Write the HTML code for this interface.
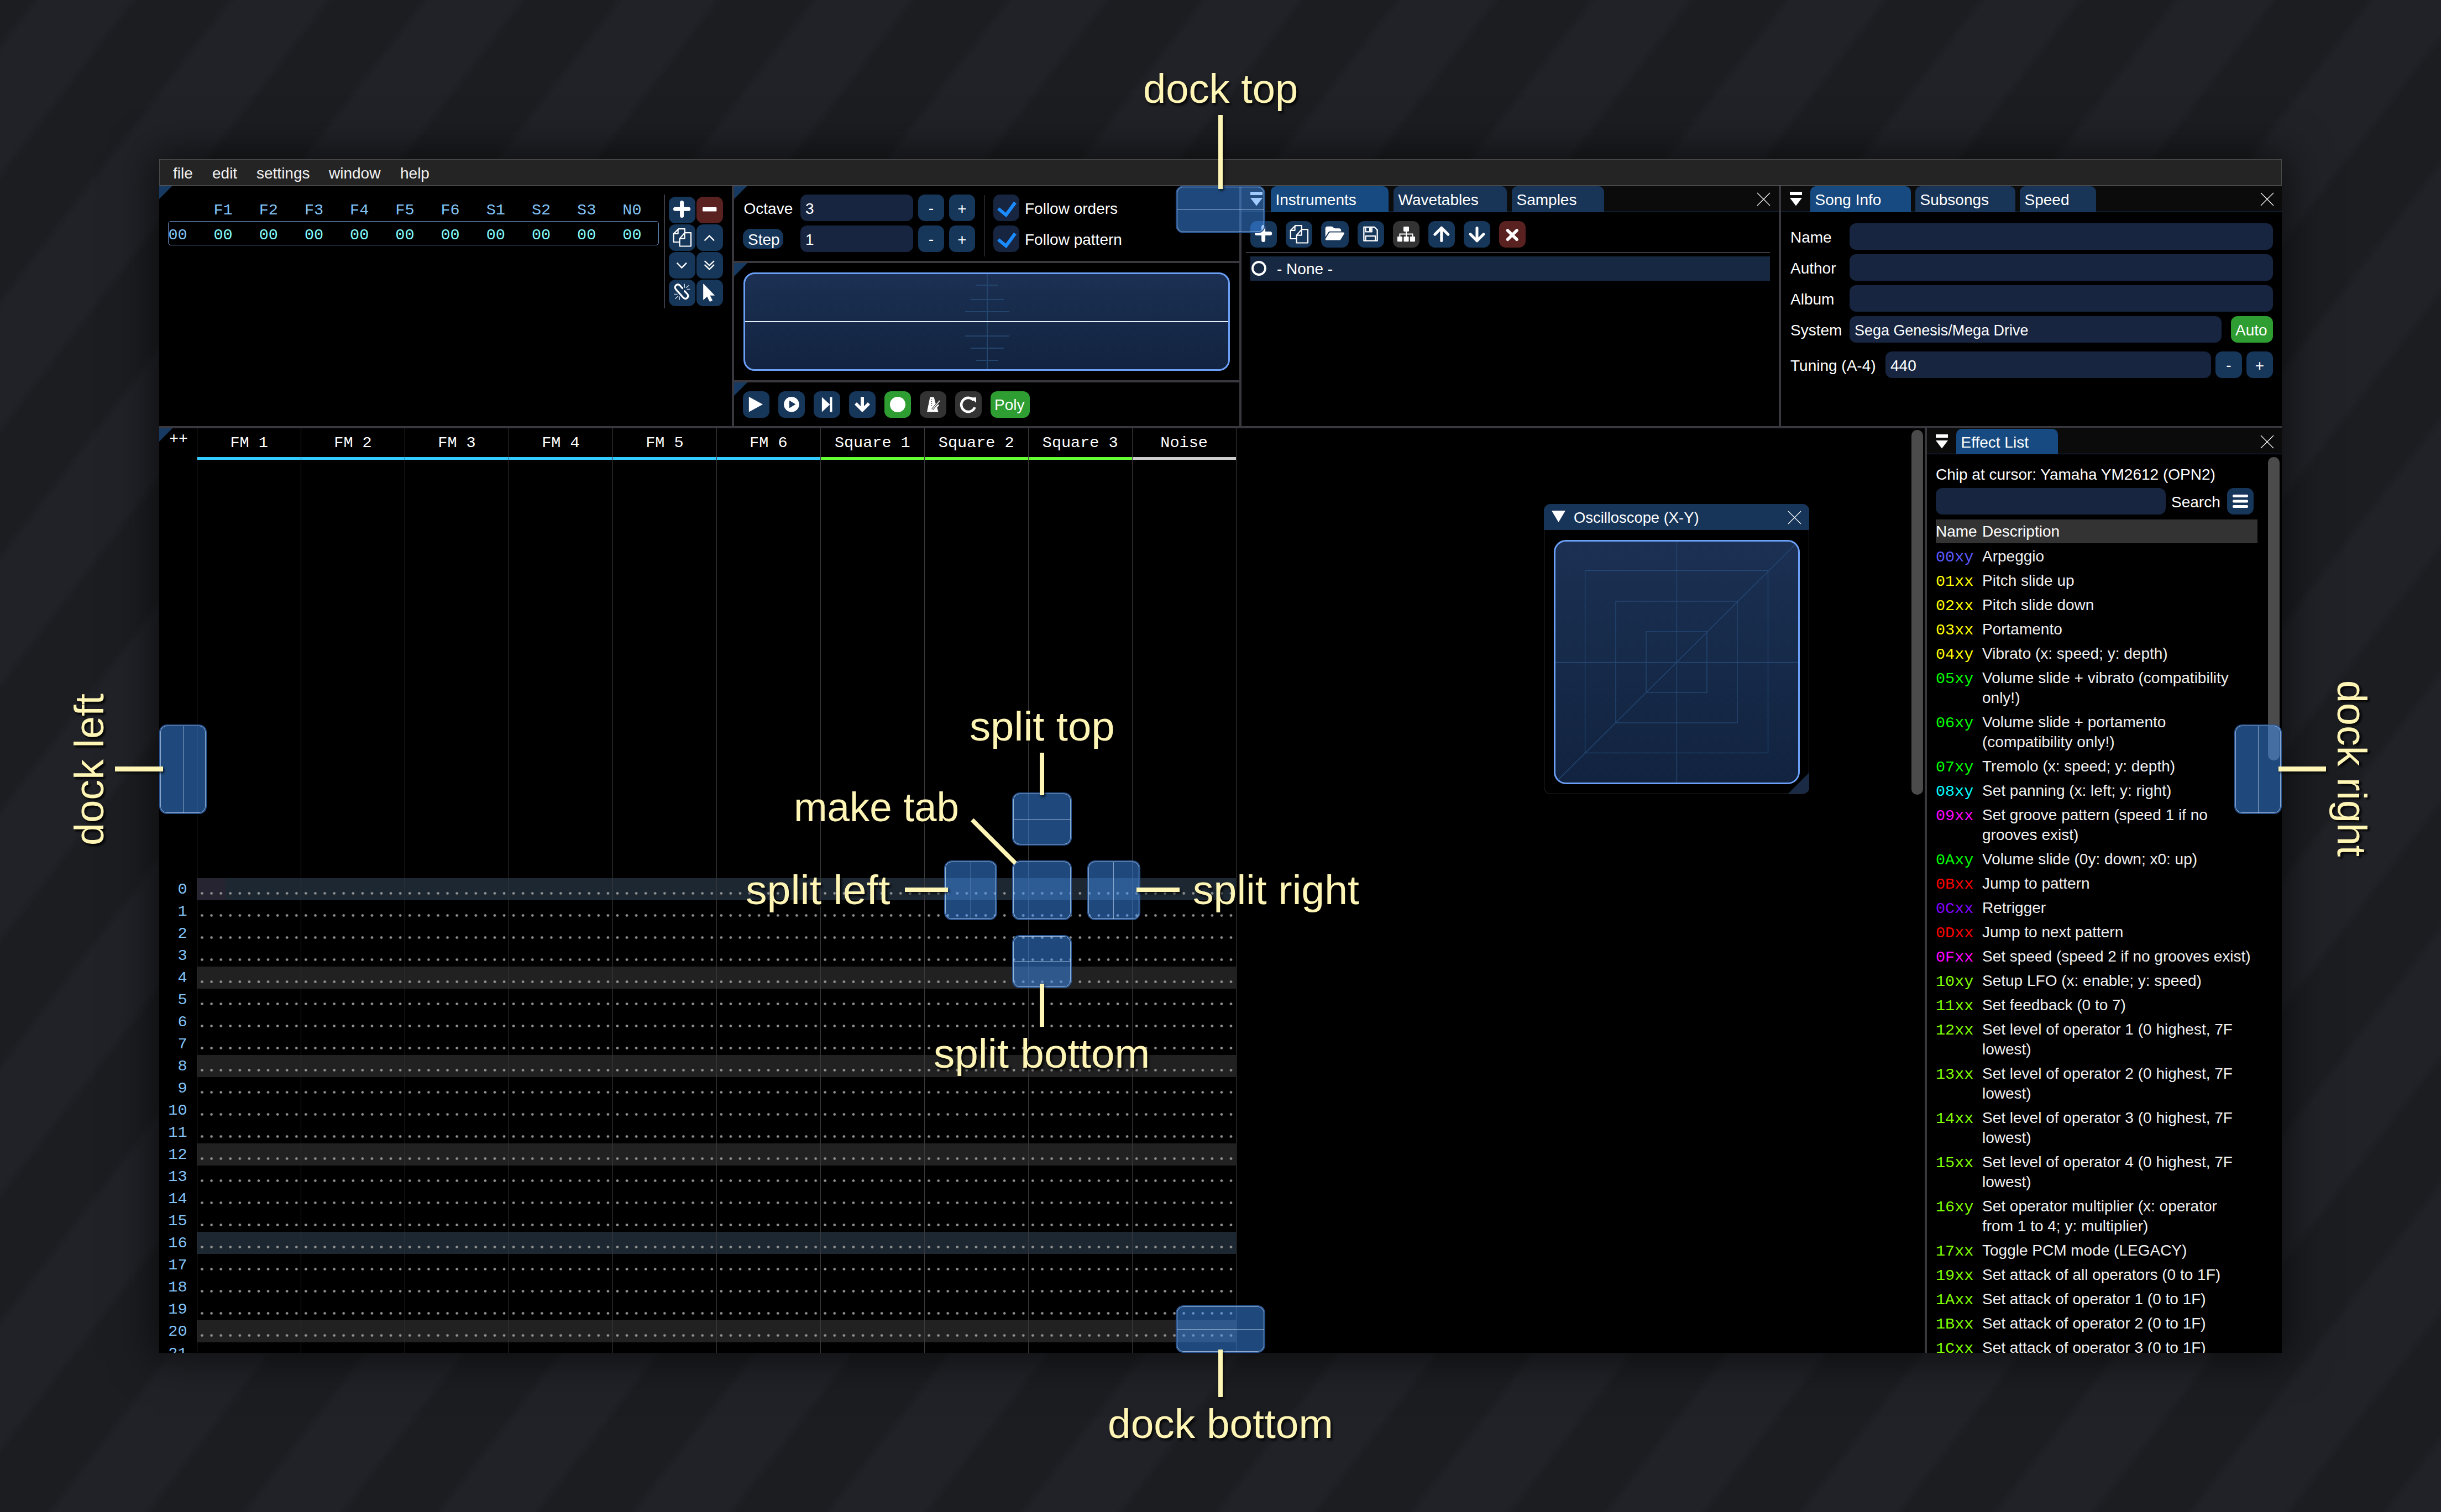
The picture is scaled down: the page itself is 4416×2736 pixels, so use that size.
<!DOCTYPE html><html><head><meta charset="utf-8"><style>
html,body{margin:0;padding:0;}
body{width:4416px;height:2736px;overflow:hidden;position:relative;
background-color:#1e1f23;
background-image:repeating-linear-gradient(127.33deg,#1c1d21 0px,#1c1d21 44px,#212227 60px,#212227 184px,#1c1d21 200px,#1c1d21 279.9px);
font-family:"Liberation Sans", sans-serif;}
div,svg{position:absolute;box-sizing:border-box;}
.t{white-space:pre;}
.s{font-family:"Liberation Sans", sans-serif;}
.m{font-family:"Liberation Mono", monospace;}
.ann{font-family:"Liberation Sans", sans-serif;color:#fff5b5;font-size:74px;line-height:74px;white-space:pre;text-shadow:3px 4px 4px rgba(0,0,0,0.85);}
</style></head><body>

<div style="left:288.0px;top:288.0px;width:3840.0px;height:2160.0px;background:#000;box-shadow:0 0 70px 12px rgba(0,0,0,0.55);"></div>
<div style="left:288.0px;top:288.0px;width:3840.0px;height:48.0px;background:#242424;border:1px solid #4a4a4a;border-bottom:1px solid #555;"></div>
<div class="t s" style="left:313.0px;top:299.8px;font-size:28px;line-height:28px;color:#f2f2f2;">file</div>
<div class="t s" style="left:384.0px;top:299.8px;font-size:28px;line-height:28px;color:#f2f2f2;">edit</div>
<div class="t s" style="left:464.0px;top:299.8px;font-size:28px;line-height:28px;color:#f2f2f2;">settings</div>
<div class="t s" style="left:595.0px;top:299.8px;font-size:28px;line-height:28px;color:#f2f2f2;">window</div>
<div class="t s" style="left:724.0px;top:299.8px;font-size:28px;line-height:28px;color:#f2f2f2;">help</div>
<div style="left:1324.0px;top:336.0px;width:4.0px;height:436.0px;background:#38383e;"></div>
<div style="left:2242.0px;top:336.0px;width:4.0px;height:436.0px;background:#38383e;"></div>
<div style="left:3218.0px;top:336.0px;width:4.0px;height:436.0px;background:#38383e;"></div>
<div style="left:1328.0px;top:472.0px;width:914.0px;height:4.0px;background:#38383e;"></div>
<div style="left:1328.0px;top:688.0px;width:914.0px;height:4.0px;background:#38383e;"></div>
<div style="left:288.0px;top:771.0px;width:3840.0px;height:4.0px;background:#38383e;"></div>
<div style="left:3482.0px;top:775.0px;width:4.0px;height:1673.0px;background:#38383e;"></div>
<svg style="left:288.0px;top:336.0px;" width="24" height="24" viewBox="0 0 24 24"><path d="M0 0H24L0 24Z" fill="#173a62"/></svg>
<div class="t m" style="left:386.5px;top:367.2px;font-size:28.5px;line-height:28.5px;color:#82c4f8;">F1</div>
<div class="t m" style="left:468.7px;top:367.2px;font-size:28.5px;line-height:28.5px;color:#82c4f8;">F2</div>
<div class="t m" style="left:550.9px;top:367.2px;font-size:28.5px;line-height:28.5px;color:#82c4f8;">F3</div>
<div class="t m" style="left:633.1px;top:367.2px;font-size:28.5px;line-height:28.5px;color:#82c4f8;">F4</div>
<div class="t m" style="left:715.3px;top:367.2px;font-size:28.5px;line-height:28.5px;color:#82c4f8;">F5</div>
<div class="t m" style="left:797.5px;top:367.2px;font-size:28.5px;line-height:28.5px;color:#82c4f8;">F6</div>
<div class="t m" style="left:879.7px;top:367.2px;font-size:28.5px;line-height:28.5px;color:#82c4f8;">S1</div>
<div class="t m" style="left:961.9px;top:367.2px;font-size:28.5px;line-height:28.5px;color:#82c4f8;">S2</div>
<div class="t m" style="left:1044.1px;top:367.2px;font-size:28.5px;line-height:28.5px;color:#82c4f8;">S3</div>
<div class="t m" style="left:1126.3px;top:367.2px;font-size:28.5px;line-height:28.5px;color:#82c4f8;">N0</div>
<div style="left:304.0px;top:400.0px;width:888.0px;height:44.0px;border:1.5px solid #6b8fc4;border-radius:5px;"></div>
<div class="t m" style="left:304.5px;top:411.7px;font-size:28.5px;line-height:28.5px;color:#82c4f8;">00</div>
<div class="t m" style="left:386.5px;top:411.7px;font-size:28.5px;line-height:28.5px;color:#80fafa;">00</div>
<div class="t m" style="left:468.7px;top:411.7px;font-size:28.5px;line-height:28.5px;color:#80fafa;">00</div>
<div class="t m" style="left:550.9px;top:411.7px;font-size:28.5px;line-height:28.5px;color:#80fafa;">00</div>
<div class="t m" style="left:633.1px;top:411.7px;font-size:28.5px;line-height:28.5px;color:#80fafa;">00</div>
<div class="t m" style="left:715.3px;top:411.7px;font-size:28.5px;line-height:28.5px;color:#80fafa;">00</div>
<div class="t m" style="left:797.5px;top:411.7px;font-size:28.5px;line-height:28.5px;color:#80fafa;">00</div>
<div class="t m" style="left:879.7px;top:411.7px;font-size:28.5px;line-height:28.5px;color:#80fafa;">00</div>
<div class="t m" style="left:961.9px;top:411.7px;font-size:28.5px;line-height:28.5px;color:#80fafa;">00</div>
<div class="t m" style="left:1044.1px;top:411.7px;font-size:28.5px;line-height:28.5px;color:#80fafa;">00</div>
<div class="t m" style="left:1126.3px;top:411.7px;font-size:28.5px;line-height:28.5px;color:#80fafa;">00</div>
<div style="left:1201.0px;top:352.0px;width:1.5px;height:206.0px;background:#3c3c44;"></div>
<div style="left:1210.0px;top:356.0px;width:48.0px;height:48.0px;background:#16365a;border-radius:12px;"></div>
<svg style="left:1210.0px;top:356.0px;" width="48" height="48" viewBox="0 0 48 48"><path d="M23.6 10.5V34.5M11.5 22.3H35.7" stroke="#ffffff" stroke-width="7" stroke-linecap="round"/></svg>
<div style="left:1260.0px;top:356.0px;width:48.0px;height:48.0px;background:#5a2121;border-radius:12px;"></div>
<svg style="left:1260.0px;top:356.0px;" width="48" height="48" viewBox="0 0 48 48"><rect x="11" y="18.9" width="25.4" height="7.6" rx="1.2" fill="#ffffff"/></svg>
<div style="left:1210.0px;top:406.0px;width:48.0px;height:48.0px;background:#16365a;border-radius:12px;"></div>
<svg style="left:1210.0px;top:406.0px;" width="48" height="48" viewBox="0 0 48 48"><g fill="none" stroke="#ffffff" stroke-width="2.2" stroke-linejoin="round"><path d="M19.5 32H8.6V17L17.6 8.1H28.8V15"/><path d="M16.6 8.6V16.8H8.6"/><path d="M19.6 25.7L28.8 15.2H40V39.5H19.6Z"/><path d="M28.6 15.6V25.7H19.8"/></g></svg>
<div style="left:1260.0px;top:406.0px;width:48.0px;height:48.0px;background:#16365a;border-radius:12px;"></div>
<svg style="left:1260.0px;top:406.0px;" width="48" height="48" viewBox="0 0 48 48"><path d="M14.5 29.4L23.3 20.6 32 29.4" fill="none" stroke="#ffffff" stroke-width="2.4"/></svg>
<div style="left:1210.0px;top:456.0px;width:48.0px;height:48.0px;background:#16365a;border-radius:12px;"></div>
<svg style="left:1210.0px;top:456.0px;" width="48" height="48" viewBox="0 0 48 48"><path d="M14.6 19.7L23.4 28.5 32 19.7" fill="none" stroke="#ffffff" stroke-width="2.4"/></svg>
<div style="left:1260.0px;top:456.0px;width:48.0px;height:48.0px;background:#16365a;border-radius:12px;"></div>
<svg style="left:1260.0px;top:456.0px;" width="48" height="48" viewBox="0 0 48 48"><path d="M14.6 16L23.3 24.4 32 16M14.6 22.8L23.3 31.3 32 22.8" fill="none" stroke="#ffffff" stroke-width="2.4"/></svg>
<div style="left:1210.0px;top:506.0px;width:48.0px;height:48.0px;background:#16365a;border-radius:12px;"></div>
<svg style="left:1210.0px;top:506.0px;" width="48" height="48" viewBox="0 0 48 48"><g fill="none" stroke="#ffffff" stroke-width="3.2" stroke-linecap="round"><path d="M24.5 15.5L20 10.5Q16.3 7 12.8 10.3Q9.6 13.6 12.8 17.6L26 32.5Q29.6 36.3 33.3 33Q36.6 29.6 33.2 25.8L28.6 20.8"/></g><g stroke="#dfe6ee" stroke-width="1.3"><path d="M28.3 7.8V14.7M31 14.7L36.3 10.4M32.6 17.3H38.4M9.3 26.3H15.6M11.4 34.7L17.2 29.4M19.3 30.5V36.8"/></g></svg>
<div style="left:1260.0px;top:506.0px;width:48.0px;height:48.0px;background:#16365a;border-radius:12px;"></div>
<svg style="left:1260.0px;top:506.0px;" width="48" height="48" viewBox="0 0 48 48"><path d="M12.6 7.8V36.3L19.3 30.2L24.2 39.6L28.6 37.6L24 28.3H32.4Z" fill="#ffffff" stroke="#ffffff" stroke-width="0.8" stroke-linejoin="round"/></svg>
<svg style="left:1328.0px;top:336.0px;" width="24" height="24" viewBox="0 0 24 24"><path d="M0 0H24L0 24Z" fill="#173a62"/></svg>
<div class="t s" style="left:1345.5px;top:363.8px;font-size:28px;line-height:28px;color:#fff;">Octave</div>
<div style="left:1448.0px;top:352.0px;width:204.0px;height:48.0px;background:#172540;border-radius:12px;"></div>
<div class="t s" style="left:1457.0px;top:363.8px;font-size:28px;line-height:28px;color:#fff;">3</div>
<div style="left:1661.0px;top:352.0px;width:47.0px;height:48.0px;background:#16365a;border-radius:12px;"></div>
<div class="t s" style="left:1684.5px;top:363.3px;font-size:28px;line-height:28px;color:#fff;transform:translateX(-50%);">-</div>
<div style="left:1717.0px;top:352.0px;width:47.0px;height:48.0px;background:#16365a;border-radius:12px;"></div>
<div class="t s" style="left:1740.5px;top:363.8px;font-size:28px;line-height:28px;color:#fff;transform:translateX(-50%);">+</div>
<div style="left:1344.0px;top:414.0px;width:73.0px;height:36.0px;background:#16365a;border-radius:14px;"></div>
<div class="t s" style="left:1353.0px;top:419.6px;font-size:28px;line-height:28px;color:#fff;">Step</div>
<div style="left:1448.0px;top:408.0px;width:204.0px;height:48.0px;background:#172540;border-radius:12px;"></div>
<div class="t s" style="left:1457.0px;top:419.6px;font-size:28px;line-height:28px;color:#fff;">1</div>
<div style="left:1661.0px;top:408.0px;width:47.0px;height:48.0px;background:#16365a;border-radius:12px;"></div>
<div class="t s" style="left:1684.5px;top:419.3px;font-size:28px;line-height:28px;color:#fff;transform:translateX(-50%);">-</div>
<div style="left:1717.0px;top:408.0px;width:47.0px;height:48.0px;background:#16365a;border-radius:12px;"></div>
<div class="t s" style="left:1740.5px;top:419.6px;font-size:28px;line-height:28px;color:#fff;transform:translateX(-50%);">+</div>
<div style="left:1780.5px;top:353.0px;width:1.5px;height:111.0px;background:#3c3c44;"></div>
<div style="left:1797.0px;top:352.0px;width:47.0px;height:48.0px;background:#172540;border-radius:12px;"></div>
<svg style="left:1797.0px;top:352.0px;" width="47" height="48" viewBox="0 0 47 48"><path d="M9 25.5L23 37L39.5 14.5" fill="none" stroke="#1a8cff" stroke-width="6" stroke-linejoin="miter"/></svg>
<div class="t s" style="left:1854.0px;top:363.8px;font-size:28px;line-height:28px;color:#fff;">Follow orders</div>
<div style="left:1797.0px;top:408.0px;width:47.0px;height:48.0px;background:#172540;border-radius:12px;"></div>
<svg style="left:1797.0px;top:408.0px;" width="47" height="48" viewBox="0 0 47 48"><path d="M9 25.5L23 37L39.5 14.5" fill="none" stroke="#1a8cff" stroke-width="6" stroke-linejoin="miter"/></svg>
<div class="t s" style="left:1854.0px;top:419.8px;font-size:28px;line-height:28px;color:#fff;">Follow pattern</div>
<svg style="left:1328.0px;top:476.0px;" width="24" height="24" viewBox="0 0 24 24"><path d="M0 0H24L0 24Z" fill="#173a62"/></svg>
<div style="left:1345px;top:493px;width:880px;height:178px;border:3px solid #6ca0f7;border-radius:20px;background:linear-gradient(#1b3053,#11233f);overflow:hidden;"><svg style="left:0;top:0" width="874" height="172"><g stroke="#24456e" stroke-width="2"><path d="M438 0V172"/><path d="M418 20H458M408 46H468M398 68H478M398 112H478M408 134H468M418 156H458"/></g><path d="M0 86H874" stroke="#e8eefa" stroke-width="2"/></svg></div>
<svg style="left:1328.0px;top:692.0px;" width="24" height="24" viewBox="0 0 24 24"><path d="M0 0H24L0 24Z" fill="#173a62"/></svg>
<div style="left:1344.0px;top:708.0px;width:48.0px;height:48.0px;background:#16365a;border-radius:12px;"></div>
<div style="left:1408.0px;top:708.0px;width:48.0px;height:48.0px;background:#16365a;border-radius:12px;"></div>
<div style="left:1472.0px;top:708.0px;width:48.0px;height:48.0px;background:#16365a;border-radius:12px;"></div>
<div style="left:1536.0px;top:708.0px;width:48.0px;height:48.0px;background:#16365a;border-radius:12px;"></div>
<div style="left:1600.0px;top:708.0px;width:48.0px;height:48.0px;background:#2f9e32;border-radius:12px;"></div>
<div style="left:1664.0px;top:708.0px;width:48.0px;height:48.0px;background:#333333;border-radius:12px;"></div>
<div style="left:1728.0px;top:708.0px;width:48.0px;height:48.0px;background:#333333;border-radius:12px;"></div>
<svg style="left:1344.0px;top:708.0px;" width="48" height="48" viewBox="0 0 48 48"><path d="M10.8 10L36 23.7 10.8 37.4z" fill="#ffffff"/></svg>
<svg style="left:1408.0px;top:708.0px;" width="48" height="48" viewBox="0 0 48 48"><circle cx="23.9" cy="23.7" r="13.8" fill="#ffffff"/><path d="M20 16.7L31.4 23.6 20 30.5z" fill="#16365a"/></svg>
<svg style="left:1472.0px;top:708.0px;" width="48" height="48" viewBox="0 0 48 48"><path d="M14.9 10.5L29.4 24 14.9 37.4z" fill="#ffffff"/><rect x="29.4" y="10.5" width="4.1" height="26.9" fill="#ffffff"/></svg>
<svg style="left:1536.0px;top:708.0px;" width="48" height="48" viewBox="0 0 48 48"><path d="M21 10h6v17l7-7 4 4-14 14-14-14 4-4 7 7z" fill="#ffffff"/></svg>
<svg style="left:1600.0px;top:708.0px;" width="48" height="48" viewBox="0 0 48 48"><circle cx="24" cy="24" r="14" fill="#ffffff"/></svg>
<svg style="left:1664.0px;top:708.0px;" width="48" height="48" viewBox="0 0 48 48"><path d="M18.5 10.5H25.5L30 27L33 23.5L35 25.5L31.3 29.6L33.5 37.4H13z" fill="#ffffff"/><path d="M21.5 14.5V26" stroke="#333333" stroke-width="1.3" stroke-dasharray="1.5 2"/><path d="M22.5 33L36 17" stroke="#333333" stroke-width="3.5"/><path d="M22.5 33L36 17" stroke="#ffffff" stroke-width="1.6"/></svg>
<svg style="left:1728.0px;top:708.0px;" width="48" height="48" viewBox="0 0 48 48"><path d="M33.5 16.5A12.6 12.6 0 1 0 35.5 29" fill="none" stroke="#ffffff" stroke-width="4.6"/><path d="M28 11.5L38 11V21z" fill="#ffffff"/></svg>
<div style="left:1792.0px;top:708.0px;width:71.0px;height:48.0px;background:#2f9e32;border-radius:12px;"></div>
<div class="t s" style="left:1799.0px;top:719.3px;font-size:28px;line-height:28px;color:#fff;">Poly</div>
<div style="left:2246.0px;top:336.0px;width:972.0px;height:48.0px;background:#0b0b0c;"></div>
<div style="left:2246.0px;top:383.0px;width:972.0px;height:1.0px;background:#1f5a96;"></div>
<svg style="left:2261.0px;top:346.0px;" width="26" height="28" viewBox="0 0 26 28"><rect x="1" y="1" width="22" height="6" fill="#fff"/><path d="M1 12H23L12 26.5z" fill="#fff"/></svg>
<div style="left:2299.0px;top:337.0px;width:213.0px;height:47.0px;background:#164a80;border-radius:10px 10px 0 0;"></div>
<div class="t s" style="left:2307.5px;top:347.6px;font-size:28px;line-height:28px;color:#fff;">Instruments</div>
<div style="left:2521.0px;top:337.0px;width:205.0px;height:47.0px;background:#183558;border-radius:10px 10px 0 0;"></div>
<div class="t s" style="left:2529.5px;top:347.6px;font-size:28px;line-height:28px;color:#fff;">Wavetables</div>
<div style="left:2735.0px;top:337.0px;width:167.0px;height:47.0px;background:#183558;border-radius:10px 10px 0 0;"></div>
<div class="t s" style="left:2743.5px;top:347.6px;font-size:28px;line-height:28px;color:#fff;">Samples</div>
<svg style="left:3178.0px;top:348.0px;" width="25" height="25" viewBox="0 0 25 25"><path d="M1 1L24 24M24 1L1 24" stroke="#fff" stroke-width="1.2"/></svg>
<div style="left:2262.0px;top:400.0px;width:48.0px;height:48.0px;background:#16365a;border-radius:12px;"></div>
<div style="left:2326.0px;top:400.0px;width:48.0px;height:48.0px;background:#16365a;border-radius:12px;"></div>
<div style="left:2390.0px;top:400.0px;width:50.0px;height:48.0px;background:#16365a;border-radius:12px;"></div>
<div style="left:2456.0px;top:400.0px;width:48.0px;height:48.0px;background:#16365a;border-radius:12px;"></div>
<div style="left:2520.0px;top:400.0px;width:48.0px;height:48.0px;background:#333333;border-radius:12px;"></div>
<div style="left:2584.0px;top:400.0px;width:48.0px;height:48.0px;background:#16365a;border-radius:12px;"></div>
<div style="left:2648.0px;top:400.0px;width:48.0px;height:48.0px;background:#16365a;border-radius:12px;"></div>
<div style="left:2712.0px;top:400.0px;width:48.0px;height:48.0px;background:#5a2121;border-radius:12px;"></div>
<svg style="left:2262.0px;top:400.0px;" width="48" height="48" viewBox="0 0 48 48"><path d="M23.6 10.5V34.5M11.5 22.5H35.7" stroke="#ffffff" stroke-width="7" stroke-linecap="round"/></svg>
<svg style="left:2326.0px;top:400.0px;" width="48" height="48" viewBox="0 0 48 48"><g fill="none" stroke="#ffffff" stroke-width="2.2" stroke-linejoin="round"><path d="M19.5 32H8.6V17L17.6 8.1H28.8V15"/><path d="M16.6 8.6V16.8H8.6"/><path d="M19.6 25.7L28.8 15.2H40V39.5H19.6Z"/><path d="M28.6 15.6V25.7H19.8"/></g></svg>
<svg style="left:2390.0px;top:400.0px;" width="50" height="48" viewBox="0 0 50 48"><path transform="translate(7.7 8.03) scale(0.0596 0.0554)" d="M88.7 223.8L0 375.8V96C0 60.7 28.7 32 64 32H181.5c17 0 33.3 6.7 45.3 18.7l26.5 26.5c12 12 28.3 18.7 45.3 18.7H416c35.3 0 64 28.7 64 64v32H144c-22.8 0-43.8 12.1-55.3 31.8zm27.6 16.1C122.1 230 132.6 224 144 224H544c11.5 0 22 6.1 27.7 16.1s5.7 22.2-.1 32.1l-112 192C453.9 474 443.4 480 432 480H32c-11.5 0-22-6.1-27.7-16.1s-5.7-22.2 .1-32.1l112-192z" fill="#ffffff"/></svg>
<svg style="left:2456.0px;top:400.0px;" width="48" height="48" viewBox="0 0 48 48"><g fill="none" stroke="#ffffff" stroke-width="2.3" stroke-linejoin="round"><path d="M11.35 10.95H30.5L35.65 16.1V35.65H11.35Z"/><path d="M14.5 11V19.4H25.8V11"/><path d="M14.5 35.6V27.1H32.1V35.6"/></g><rect x="21" y="12.3" width="3.6" height="6.2" fill="#ffffff"/></svg>
<svg style="left:2520.0px;top:400.0px;" width="48" height="48" viewBox="0 0 48 48"><g fill="#ffffff"><rect x="19" y="9.9" width="10" height="9" rx="1.3"/><rect x="7.9" y="27.9" width="9.1" height="9.4" rx="1.3"/><rect x="19.5" y="27.9" width="9.1" height="9.4" rx="1.3"/><rect x="30.9" y="27.9" width="9.1" height="9.4" rx="1.3"/></g><path d="M24 18.9V27.9M12.4 27.9V23.4H35.5V27.9" fill="none" stroke="#ffffff" stroke-width="2"/></svg>
<svg style="left:2584.0px;top:400.0px;" width="48" height="48" viewBox="0 0 48 48"><path d="M23.8 12.5V35.5M11.8 24.2L23.8 12.2L35.8 24.2" fill="none" stroke="#ffffff" stroke-width="5" stroke-linecap="round" stroke-linejoin="round"/></svg>
<svg style="left:2648.0px;top:400.0px;" width="48" height="48" viewBox="0 0 48 48"><path d="M24 12.5V35.5M12 23.8L24 35.8L36 23.8" fill="none" stroke="#ffffff" stroke-width="5" stroke-linecap="round" stroke-linejoin="round"/></svg>
<svg style="left:2712.0px;top:400.0px;" width="48" height="48" viewBox="0 0 48 48"><path d="M15.5 17L32 33.3M32 17L15.5 33.3" stroke="#ffffff" stroke-width="5.5" stroke-linecap="round"/></svg>
<div style="left:2254.0px;top:456.0px;width:948.0px;height:1.5px;background:#3a3a40;"></div>
<div style="left:2262.0px;top:464.0px;width:940.0px;height:44.0px;background:#172843;"></div>
<svg style="left:2262.0px;top:470.0px;" width="32" height="32" viewBox="0 0 32 32"><circle cx="15.5" cy="15.5" r="11.5" fill="none" stroke="#ffffff" stroke-width="3.8"/></svg>
<div class="t s" style="left:2310.0px;top:473.3px;font-size:28px;line-height:28px;color:#fff;">- None -</div>
<div style="left:3222.0px;top:336.0px;width:906.0px;height:48.0px;background:#0b0b0c;"></div>
<div style="left:3222.0px;top:383.0px;width:906.0px;height:1.0px;background:#1f5a96;"></div>
<svg style="left:3237.0px;top:346.0px;" width="26" height="28" viewBox="0 0 26 28"><rect x="1" y="1" width="22" height="6" fill="#fff"/><path d="M1 12H23L12 26.5z" fill="#fff"/></svg>
<div style="left:3275.0px;top:337.0px;width:182.0px;height:47.0px;background:#164a80;border-radius:10px 10px 0 0;"></div>
<div class="t s" style="left:3283.5px;top:347.6px;font-size:28px;line-height:28px;color:#fff;">Song Info</div>
<div style="left:3465.0px;top:337.0px;width:181.0px;height:47.0px;background:#183558;border-radius:10px 10px 0 0;"></div>
<div class="t s" style="left:3473.5px;top:347.6px;font-size:28px;line-height:28px;color:#fff;">Subsongs</div>
<div style="left:3654.0px;top:337.0px;width:138.0px;height:47.0px;background:#183558;border-radius:10px 10px 0 0;"></div>
<div class="t s" style="left:3662.5px;top:347.6px;font-size:28px;line-height:28px;color:#fff;">Speed</div>
<svg style="left:4089.0px;top:348.0px;" width="25" height="25" viewBox="0 0 25 25"><path d="M1 1L24 24M24 1L1 24" stroke="#fff" stroke-width="1.2"/></svg>
<div class="t s" style="left:3239.0px;top:415.8px;font-size:28px;line-height:28px;color:#fff;">Name</div>
<div style="left:3346.0px;top:404.0px;width:766.0px;height:48.0px;background:#172540;border-radius:12px;"></div>
<div class="t s" style="left:3239.0px;top:471.8px;font-size:28px;line-height:28px;color:#fff;">Author</div>
<div style="left:3346.0px;top:460.0px;width:766.0px;height:48.0px;background:#172540;border-radius:12px;"></div>
<div class="t s" style="left:3239.0px;top:527.8px;font-size:28px;line-height:28px;color:#fff;">Album</div>
<div style="left:3346.0px;top:516.0px;width:766.0px;height:48.0px;background:#172540;border-radius:12px;"></div>
<div class="t s" style="left:3239.0px;top:583.8px;font-size:28px;line-height:28px;color:#fff;">System</div>
<div style="left:3346.0px;top:572.0px;width:673.0px;height:48.0px;background:#172540;border-radius:12px;"></div>
<div class="t s" style="left:3355.0px;top:583.8px;font-size:28px;line-height:28px;color:#fff;transform:scaleX(0.962);transform-origin:0 0;">Sega Genesis/Mega Drive</div>
<div style="left:4036.0px;top:572.0px;width:76.0px;height:48.0px;background:#2f9e32;border-radius:12px;"></div>
<div class="t s" style="left:4044.0px;top:583.8px;font-size:28px;line-height:28px;color:#fff;">Auto</div>
<div class="t s" style="left:3239.0px;top:647.8px;font-size:28px;line-height:28px;color:#fff;">Tuning (A-4)</div>
<div style="left:3411.0px;top:636.0px;width:589.0px;height:48.0px;background:#172540;border-radius:12px;"></div>
<div class="t s" style="left:3420.0px;top:647.8px;font-size:28px;line-height:28px;color:#fff;">440</div>
<div style="left:4008.0px;top:636.0px;width:48.0px;height:48.0px;background:#16365a;border-radius:12px;"></div>
<div class="t s" style="left:4032.0px;top:647.3px;font-size:28px;line-height:28px;color:#fff;transform:translateX(-50%);">-</div>
<div style="left:4064.0px;top:636.0px;width:48.0px;height:48.0px;background:#16365a;border-radius:12px;"></div>
<div class="t s" style="left:4088.0px;top:647.8px;font-size:28px;line-height:28px;color:#fff;transform:translateX(-50%);">+</div>
<svg style="left:288.0px;top:775.0px;" width="24" height="24" viewBox="0 0 24 24"><path d="M0 0H24L0 24Z" fill="#173a62"/></svg>
<div class="t m" style="left:306.0px;top:781.2px;font-size:28.5px;line-height:28.5px;color:#fff;">++</div>
<div style="left:288px;top:775px;width:3194px;height:1673px;overflow:hidden;">
<div style="left:68.6px;top:813.8px;width:1879.4px;height:40.0px;background:#1c2731;"></div>
<div style="left:68.6px;top:973.8px;width:1879.4px;height:40.0px;background:#212121;"></div>
<div style="left:68.6px;top:1133.8px;width:1879.4px;height:40.0px;background:#212121;"></div>
<div style="left:68.6px;top:1293.8px;width:1879.4px;height:40.0px;background:#212121;"></div>
<div style="left:68.6px;top:1453.8px;width:1879.4px;height:40.0px;background:#1c2731;"></div>
<div style="left:68.6px;top:1613.8px;width:1879.4px;height:40.0px;background:#212121;"></div>
<div style="left:68.6px;top:813.8px;width:51.4px;height:40.0px;background:#262430;"></div>
<div style="left:68.0px;top:0.0px;width:1.2px;height:1673.0px;background:#3a3a3e;"></div>
<div style="left:255.9px;top:0.0px;width:1.2px;height:1673.0px;background:#3a3a3e;"></div>
<div style="left:443.9px;top:0.0px;width:1.2px;height:1673.0px;background:#3a3a3e;"></div>
<div style="left:631.8px;top:0.0px;width:1.2px;height:1673.0px;background:#3a3a3e;"></div>
<div style="left:819.8px;top:0.0px;width:1.2px;height:1673.0px;background:#3a3a3e;"></div>
<div style="left:1007.8px;top:0.0px;width:1.2px;height:1673.0px;background:#3a3a3e;"></div>
<div style="left:1195.7px;top:0.0px;width:1.2px;height:1673.0px;background:#3a3a3e;"></div>
<div style="left:1383.7px;top:0.0px;width:1.2px;height:1673.0px;background:#3a3a3e;"></div>
<div style="left:1571.6px;top:0.0px;width:1.2px;height:1673.0px;background:#3a3a3e;"></div>
<div style="left:1759.6px;top:0.0px;width:1.2px;height:1673.0px;background:#3a3a3e;"></div>
<div style="left:1947.5px;top:0.0px;width:1.2px;height:1673.0px;background:#3a3a3e;"></div>
<div class="t m" style="left:162.6px;top:13.2px;font-size:28.5px;line-height:28.5px;color:#fff;transform:translateX(-50%);">FM 1</div>
<div style="left:69.2px;top:52.0px;width:186.8px;height:4.6px;background:#33ccff;"></div>
<div class="t m" style="left:350.5px;top:13.2px;font-size:28.5px;line-height:28.5px;color:#fff;transform:translateX(-50%);">FM 2</div>
<div style="left:257.1px;top:52.0px;width:186.8px;height:4.6px;background:#33ccff;"></div>
<div class="t m" style="left:538.5px;top:13.2px;font-size:28.5px;line-height:28.5px;color:#fff;transform:translateX(-50%);">FM 3</div>
<div style="left:445.1px;top:52.0px;width:186.8px;height:4.6px;background:#33ccff;"></div>
<div class="t m" style="left:726.4px;top:13.2px;font-size:28.5px;line-height:28.5px;color:#fff;transform:translateX(-50%);">FM 4</div>
<div style="left:633.0px;top:52.0px;width:186.8px;height:4.6px;background:#33ccff;"></div>
<div class="t m" style="left:914.4px;top:13.2px;font-size:28.5px;line-height:28.5px;color:#fff;transform:translateX(-50%);">FM 5</div>
<div style="left:821.0px;top:52.0px;width:186.8px;height:4.6px;background:#33ccff;"></div>
<div class="t m" style="left:1102.3px;top:13.2px;font-size:28.5px;line-height:28.5px;color:#fff;transform:translateX(-50%);">FM 6</div>
<div style="left:1008.9px;top:52.0px;width:186.8px;height:4.6px;background:#33ccff;"></div>
<div class="t m" style="left:1290.3px;top:13.2px;font-size:28.5px;line-height:28.5px;color:#fff;transform:translateX(-50%);">Square 1</div>
<div style="left:1196.9px;top:52.0px;width:186.8px;height:4.6px;background:#66ff33;"></div>
<div class="t m" style="left:1478.2px;top:13.2px;font-size:28.5px;line-height:28.5px;color:#fff;transform:translateX(-50%);">Square 2</div>
<div style="left:1384.8px;top:52.0px;width:186.8px;height:4.6px;background:#66ff33;"></div>
<div class="t m" style="left:1666.2px;top:13.2px;font-size:28.5px;line-height:28.5px;color:#fff;transform:translateX(-50%);">Square 3</div>
<div style="left:1572.8px;top:52.0px;width:186.8px;height:4.6px;background:#66ff33;"></div>
<div class="t m" style="left:1854.1px;top:13.2px;font-size:28.5px;line-height:28.5px;color:#fff;transform:translateX(-50%);">Noise</div>
<div style="left:1760.8px;top:52.0px;width:186.8px;height:4.6px;background:#cccccc;"></div>
<div style="left:68.6px;top:813.8px;width:1879.4px;height:880.0px;background-image:radial-gradient(circle at 8.5px 27.5px,#909090 0px,#909090 1.8px,rgba(144,144,144,0) 2.8px);background-size:17.086px 40.0px;"></div>
<div class="t m" style="left:50.5px;top:821.2px;font-size:28.5px;line-height:28.5px;color:#82c4f8;transform:translateX(-100%);">0</div>
<div class="t m" style="left:50.5px;top:861.2px;font-size:28.5px;line-height:28.5px;color:#82c4f8;transform:translateX(-100%);">1</div>
<div class="t m" style="left:50.5px;top:901.2px;font-size:28.5px;line-height:28.5px;color:#82c4f8;transform:translateX(-100%);">2</div>
<div class="t m" style="left:50.5px;top:941.2px;font-size:28.5px;line-height:28.5px;color:#82c4f8;transform:translateX(-100%);">3</div>
<div class="t m" style="left:50.5px;top:981.2px;font-size:28.5px;line-height:28.5px;color:#82c4f8;transform:translateX(-100%);">4</div>
<div class="t m" style="left:50.5px;top:1021.2px;font-size:28.5px;line-height:28.5px;color:#82c4f8;transform:translateX(-100%);">5</div>
<div class="t m" style="left:50.5px;top:1061.2px;font-size:28.5px;line-height:28.5px;color:#82c4f8;transform:translateX(-100%);">6</div>
<div class="t m" style="left:50.5px;top:1101.2px;font-size:28.5px;line-height:28.5px;color:#82c4f8;transform:translateX(-100%);">7</div>
<div class="t m" style="left:50.5px;top:1141.2px;font-size:28.5px;line-height:28.5px;color:#82c4f8;transform:translateX(-100%);">8</div>
<div class="t m" style="left:50.5px;top:1181.2px;font-size:28.5px;line-height:28.5px;color:#82c4f8;transform:translateX(-100%);">9</div>
<div class="t m" style="left:50.5px;top:1221.2px;font-size:28.5px;line-height:28.5px;color:#82c4f8;transform:translateX(-100%);">10</div>
<div class="t m" style="left:50.5px;top:1261.2px;font-size:28.5px;line-height:28.5px;color:#82c4f8;transform:translateX(-100%);">11</div>
<div class="t m" style="left:50.5px;top:1301.2px;font-size:28.5px;line-height:28.5px;color:#82c4f8;transform:translateX(-100%);">12</div>
<div class="t m" style="left:50.5px;top:1341.2px;font-size:28.5px;line-height:28.5px;color:#82c4f8;transform:translateX(-100%);">13</div>
<div class="t m" style="left:50.5px;top:1381.2px;font-size:28.5px;line-height:28.5px;color:#82c4f8;transform:translateX(-100%);">14</div>
<div class="t m" style="left:50.5px;top:1421.2px;font-size:28.5px;line-height:28.5px;color:#82c4f8;transform:translateX(-100%);">15</div>
<div class="t m" style="left:50.5px;top:1461.2px;font-size:28.5px;line-height:28.5px;color:#82c4f8;transform:translateX(-100%);">16</div>
<div class="t m" style="left:50.5px;top:1501.2px;font-size:28.5px;line-height:28.5px;color:#82c4f8;transform:translateX(-100%);">17</div>
<div class="t m" style="left:50.5px;top:1541.2px;font-size:28.5px;line-height:28.5px;color:#82c4f8;transform:translateX(-100%);">18</div>
<div class="t m" style="left:50.5px;top:1581.2px;font-size:28.5px;line-height:28.5px;color:#82c4f8;transform:translateX(-100%);">19</div>
<div class="t m" style="left:50.5px;top:1621.2px;font-size:28.5px;line-height:28.5px;color:#82c4f8;transform:translateX(-100%);">20</div>
<div class="t m" style="left:50.5px;top:1661.2px;font-size:28.5px;line-height:28.5px;color:#82c4f8;transform:translateX(-100%);">21</div>
</div>
<div style="left:3458.0px;top:778.0px;width:21.0px;height:660.0px;background:#4b4b4b;border-radius:10px;"></div>
<div style="left:2793.0px;top:911.5px;width:480.0px;height:525.0px;background:#000;border:1.5px solid #2a2a32;border-radius:12px;"></div>
<div style="left:2793.0px;top:911.5px;width:480.0px;height:47.0px;background:#173559;border-radius:12px 12px 0 0;"></div>
<svg style="left:2807.0px;top:924.0px;" width="26" height="22" viewBox="0 0 26 22"><path d="M0 0h25L12.5 21z" fill="#ffffff"/></svg>
<div class="t s" style="left:2847.0px;top:922.7px;font-size:28px;line-height:28px;color:#fff;transform:scaleX(0.977);transform-origin:0 0;">Oscilloscope (X-Y)</div>
<svg style="left:3233.5px;top:923.5px;" width="25" height="25" viewBox="0 0 25 25"><path d="M1 1L24 24M24 1L1 24" stroke="#fff" stroke-width="1.2"/></svg>
<div style="left:2811px;top:977px;width:445px;height:442px;border:3px solid #6ca0f7;border-radius:22px;background:linear-gradient(#1b3053,#11233f);overflow:hidden;"><svg style="left:0;top:0" width="439" height="436"><g fill="none" stroke="#264a76" stroke-width="1.3"><path d="M219.5 0V436M0 218.5H439"/><rect x="53.5" y="52.5" width="331" height="330"/><rect x="109" y="108" width="220" height="220"/><rect x="164" y="163" width="110" height="110"/><path d="M0 436L439 0"/></g></svg></div>
<svg style="left:3235.0px;top:1398.0px;" width="38" height="38" viewBox="0 0 38 38"><path d="M38 0V26Q38 38 26 38H0Z" fill="#1b2a44"/></svg>
<div style="left:3486.0px;top:774.0px;width:642.0px;height:48.0px;background:#0b0b0c;"></div>
<div style="left:3486.0px;top:821.0px;width:642.0px;height:1.0px;background:#1f5a96;"></div>
<svg style="left:3501.0px;top:785.0px;" width="26" height="28" viewBox="0 0 26 28"><rect x="1" y="1" width="22" height="6" fill="#fff"/><path d="M1 12H23L12 26.5z" fill="#fff"/></svg>
<div style="left:3539.0px;top:776.0px;width:184.0px;height:46.0px;background:#164a80;border-radius:10px 10px 0 0;"></div>
<div class="t s" style="left:3547.5px;top:786.8px;font-size:28px;line-height:28px;color:#fff;">Effect List</div>
<svg style="left:4089.0px;top:787.0px;" width="25" height="25" viewBox="0 0 25 25"><path d="M1 1L24 24M24 1L1 24" stroke="#fff" stroke-width="1.2"/></svg>
<div class="t s" style="left:3502.0px;top:844.9px;font-size:28px;line-height:28px;color:#fff;">Chip at cursor: Yamaha YM2612 (OPN2)</div>
<div style="left:3502.0px;top:883.0px;width:416.0px;height:48.0px;background:#172540;border-radius:12px;"></div>
<div class="t s" style="left:3928.0px;top:894.6px;font-size:28px;line-height:28px;color:#fff;">Search</div>
<div style="left:4029.0px;top:883.0px;width:48.0px;height:48.0px;background:#16365a;border-radius:12px;"></div>
<svg style="left:4029.0px;top:883.0px;" width="48" height="48" viewBox="0 0 48 48"><g fill="#ffffff"><rect x="10" y="12" width="28" height="5" rx="2"/><rect x="10" y="21.5" width="28" height="5" rx="2"/><rect x="10" y="31" width="28" height="5" rx="2"/></g></svg>
<div style="left:3502.0px;top:940.0px;width:582.0px;height:43.0px;background:#333333;"></div>
<div class="t s" style="left:3502.0px;top:948.3px;font-size:28px;line-height:28px;color:#fff;">Name</div>
<div class="t s" style="left:3586.0px;top:948.3px;font-size:28px;line-height:28px;color:#fff;">Description</div>
<div style="left:3486px;top:983px;width:642px;height:1465px;overflow:hidden;">
<div class="t m" style="left:16.0px;top:11.7px;font-size:28.5px;line-height:28.5px;color:#5a5aff;">00xy</div>
<div class="t s" style="left:100.0px;top:9.8px;font-size:28px;line-height:28px;color:#f0f0f0;">Arpeggio</div>
<div class="t m" style="left:16.0px;top:55.7px;font-size:28.5px;line-height:28.5px;color:#ffff00;">01xx</div>
<div class="t s" style="left:100.0px;top:53.8px;font-size:28px;line-height:28px;color:#f0f0f0;">Pitch slide up</div>
<div class="t m" style="left:16.0px;top:99.7px;font-size:28.5px;line-height:28.5px;color:#ffff00;">02xx</div>
<div class="t s" style="left:100.0px;top:97.8px;font-size:28px;line-height:28px;color:#f0f0f0;">Pitch slide down</div>
<div class="t m" style="left:16.0px;top:143.7px;font-size:28.5px;line-height:28.5px;color:#ffff00;">03xx</div>
<div class="t s" style="left:100.0px;top:141.8px;font-size:28px;line-height:28px;color:#f0f0f0;">Portamento</div>
<div class="t m" style="left:16.0px;top:187.7px;font-size:28.5px;line-height:28.5px;color:#ffff00;">04xy</div>
<div class="t s" style="left:100.0px;top:185.8px;font-size:28px;line-height:28px;color:#f0f0f0;">Vibrato (x: speed; y: depth)</div>
<div class="t m" style="left:16.0px;top:231.7px;font-size:28.5px;line-height:28.5px;color:#00ff00;">05xy</div>
<div class="t s" style="left:100.0px;top:229.8px;font-size:28px;line-height:28px;color:#f0f0f0;">Volume slide + vibrato (compatibility</div>
<div class="t s" style="left:100.0px;top:265.8px;font-size:28px;line-height:28px;color:#f0f0f0;">only!)</div>
<div class="t m" style="left:16.0px;top:311.7px;font-size:28.5px;line-height:28.5px;color:#00ff00;">06xy</div>
<div class="t s" style="left:100.0px;top:309.8px;font-size:28px;line-height:28px;color:#f0f0f0;">Volume slide + portamento</div>
<div class="t s" style="left:100.0px;top:345.8px;font-size:28px;line-height:28px;color:#f0f0f0;">(compatibility only!)</div>
<div class="t m" style="left:16.0px;top:391.7px;font-size:28.5px;line-height:28.5px;color:#00ff00;">07xy</div>
<div class="t s" style="left:100.0px;top:389.8px;font-size:28px;line-height:28px;color:#f0f0f0;">Tremolo (x: speed; y: depth)</div>
<div class="t m" style="left:16.0px;top:435.7px;font-size:28.5px;line-height:28.5px;color:#00ffff;">08xy</div>
<div class="t s" style="left:100.0px;top:433.8px;font-size:28px;line-height:28px;color:#f0f0f0;">Set panning (x: left; y: right)</div>
<div class="t m" style="left:16.0px;top:479.7px;font-size:28.5px;line-height:28.5px;color:#ff00ff;">09xx</div>
<div class="t s" style="left:100.0px;top:477.8px;font-size:28px;line-height:28px;color:#f0f0f0;">Set groove pattern (speed 1 if no</div>
<div class="t s" style="left:100.0px;top:513.8px;font-size:28px;line-height:28px;color:#f0f0f0;">grooves exist)</div>
<div class="t m" style="left:16.0px;top:559.7px;font-size:28.5px;line-height:28.5px;color:#00ff00;">0Axy</div>
<div class="t s" style="left:100.0px;top:557.8px;font-size:28px;line-height:28px;color:#f0f0f0;">Volume slide (0y: down; x0: up)</div>
<div class="t m" style="left:16.0px;top:603.7px;font-size:28.5px;line-height:28.5px;color:#ff0000;">0Bxx</div>
<div class="t s" style="left:100.0px;top:601.8px;font-size:28px;line-height:28px;color:#f0f0f0;">Jump to pattern</div>
<div class="t m" style="left:16.0px;top:647.7px;font-size:28.5px;line-height:28.5px;color:#8000ff;">0Cxx</div>
<div class="t s" style="left:100.0px;top:645.8px;font-size:28px;line-height:28px;color:#f0f0f0;">Retrigger</div>
<div class="t m" style="left:16.0px;top:691.7px;font-size:28.5px;line-height:28.5px;color:#ff0000;">0Dxx</div>
<div class="t s" style="left:100.0px;top:689.8px;font-size:28px;line-height:28px;color:#f0f0f0;">Jump to next pattern</div>
<div class="t m" style="left:16.0px;top:735.7px;font-size:28.5px;line-height:28.5px;color:#ff00ff;">0Fxx</div>
<div class="t s" style="left:100.0px;top:733.8px;font-size:28px;line-height:28px;color:#f0f0f0;">Set speed (speed 2 if no grooves exist)</div>
<div class="t m" style="left:16.0px;top:779.7px;font-size:28.5px;line-height:28.5px;color:#80ff00;">10xy</div>
<div class="t s" style="left:100.0px;top:777.8px;font-size:28px;line-height:28px;color:#f0f0f0;">Setup LFO (x: enable; y: speed)</div>
<div class="t m" style="left:16.0px;top:823.7px;font-size:28.5px;line-height:28.5px;color:#80ff00;">11xx</div>
<div class="t s" style="left:100.0px;top:821.8px;font-size:28px;line-height:28px;color:#f0f0f0;">Set feedback (0 to 7)</div>
<div class="t m" style="left:16.0px;top:867.7px;font-size:28.5px;line-height:28.5px;color:#80ff00;">12xx</div>
<div class="t s" style="left:100.0px;top:865.8px;font-size:28px;line-height:28px;color:#f0f0f0;">Set level of operator 1 (0 highest, 7F</div>
<div class="t s" style="left:100.0px;top:901.8px;font-size:28px;line-height:28px;color:#f0f0f0;">lowest)</div>
<div class="t m" style="left:16.0px;top:947.7px;font-size:28.5px;line-height:28.5px;color:#80ff00;">13xx</div>
<div class="t s" style="left:100.0px;top:945.8px;font-size:28px;line-height:28px;color:#f0f0f0;">Set level of operator 2 (0 highest, 7F</div>
<div class="t s" style="left:100.0px;top:981.8px;font-size:28px;line-height:28px;color:#f0f0f0;">lowest)</div>
<div class="t m" style="left:16.0px;top:1027.7px;font-size:28.5px;line-height:28.5px;color:#80ff00;">14xx</div>
<div class="t s" style="left:100.0px;top:1025.8px;font-size:28px;line-height:28px;color:#f0f0f0;">Set level of operator 3 (0 highest, 7F</div>
<div class="t s" style="left:100.0px;top:1061.8px;font-size:28px;line-height:28px;color:#f0f0f0;">lowest)</div>
<div class="t m" style="left:16.0px;top:1107.7px;font-size:28.5px;line-height:28.5px;color:#80ff00;">15xx</div>
<div class="t s" style="left:100.0px;top:1105.8px;font-size:28px;line-height:28px;color:#f0f0f0;">Set level of operator 4 (0 highest, 7F</div>
<div class="t s" style="left:100.0px;top:1141.8px;font-size:28px;line-height:28px;color:#f0f0f0;">lowest)</div>
<div class="t m" style="left:16.0px;top:1187.7px;font-size:28.5px;line-height:28.5px;color:#80ff00;">16xy</div>
<div class="t s" style="left:100.0px;top:1185.8px;font-size:28px;line-height:28px;color:#f0f0f0;">Set operator multiplier (x: operator</div>
<div class="t s" style="left:100.0px;top:1221.8px;font-size:28px;line-height:28px;color:#f0f0f0;">from 1 to 4; y: multiplier)</div>
<div class="t m" style="left:16.0px;top:1267.7px;font-size:28.5px;line-height:28.5px;color:#80ff00;">17xx</div>
<div class="t s" style="left:100.0px;top:1265.8px;font-size:28px;line-height:28px;color:#f0f0f0;">Toggle PCM mode (LEGACY)</div>
<div class="t m" style="left:16.0px;top:1311.7px;font-size:28.5px;line-height:28.5px;color:#80ff00;">19xx</div>
<div class="t s" style="left:100.0px;top:1309.8px;font-size:28px;line-height:28px;color:#f0f0f0;">Set attack of all operators (0 to 1F)</div>
<div class="t m" style="left:16.0px;top:1355.7px;font-size:28.5px;line-height:28.5px;color:#80ff00;">1Axx</div>
<div class="t s" style="left:100.0px;top:1353.8px;font-size:28px;line-height:28px;color:#f0f0f0;">Set attack of operator 1 (0 to 1F)</div>
<div class="t m" style="left:16.0px;top:1399.7px;font-size:28.5px;line-height:28.5px;color:#80ff00;">1Bxx</div>
<div class="t s" style="left:100.0px;top:1397.8px;font-size:28px;line-height:28px;color:#f0f0f0;">Set attack of operator 2 (0 to 1F)</div>
<div class="t m" style="left:16.0px;top:1443.7px;font-size:28.5px;line-height:28.5px;color:#80ff00;">1Cxx</div>
<div class="t s" style="left:100.0px;top:1441.8px;font-size:28px;line-height:28px;color:#f0f0f0;">Set attack of operator 3 (0 to 1F)</div>
</div>
<div style="left:4102.5px;top:826.5px;width:21.5px;height:549.0px;background:#4b4b4b;border-radius:10px;"></div>
<div style="left:2127px;top:336px;width:162px;height:86px;background:rgba(63,149,253,0.49);border-radius:14px;border:2.2px solid #285492;box-shadow:inset 0 0 0 1px rgba(200,220,245,0.7);"></div>
<div style="left:2129.5px;top:378.5px;width:157.0px;height:1.0px;background:rgba(200,220,245,0.6);"></div>
<div style="left:2127px;top:2362px;width:162px;height:86px;background:rgba(63,149,253,0.49);border-radius:14px;border:2.2px solid #285492;box-shadow:inset 0 0 0 1px rgba(200,220,245,0.7);"></div>
<div style="left:2129.5px;top:2404.5px;width:157.0px;height:1.0px;background:rgba(200,220,245,0.6);"></div>
<div style="left:288px;top:1311px;width:86px;height:162px;background:rgba(63,149,253,0.49);border-radius:14px;border:2.2px solid #285492;box-shadow:inset 0 0 0 1px rgba(200,220,245,0.7);"></div>
<div style="left:330.5px;top:1313.5px;width:1.0px;height:157.0px;background:rgba(200,220,245,0.6);"></div>
<div style="left:4042px;top:1311px;width:86px;height:162px;background:rgba(63,149,253,0.49);border-radius:14px;border:2.2px solid #285492;box-shadow:inset 0 0 0 1px rgba(200,220,245,0.7);"></div>
<div style="left:4084.5px;top:1313.5px;width:1.0px;height:157.0px;background:rgba(200,220,245,0.6);"></div>
<div style="left:1831px;top:1434px;width:108px;height:96px;background:rgba(63,149,253,0.49);border-radius:14px;border:2.2px solid #285492;box-shadow:inset 0 0 0 1px rgba(200,220,245,0.7);"></div>
<div style="left:1833.5px;top:1481.5px;width:103.0px;height:1.0px;background:rgba(200,220,245,0.6);"></div>
<div style="left:1831px;top:1557px;width:108px;height:108px;background:rgba(63,149,253,0.49);border-radius:14px;border:2.2px solid #285492;box-shadow:inset 0 0 0 1px rgba(200,220,245,0.7);"></div>
<div style="left:1708px;top:1557px;width:96px;height:108px;background:rgba(63,149,253,0.49);border-radius:14px;border:2.2px solid #285492;box-shadow:inset 0 0 0 1px rgba(200,220,245,0.7);"></div>
<div style="left:1755.5px;top:1559.5px;width:1.0px;height:103.0px;background:rgba(200,220,245,0.6);"></div>
<div style="left:1966.5px;top:1557px;width:96px;height:108px;background:rgba(63,149,253,0.49);border-radius:14px;border:2.2px solid #285492;box-shadow:inset 0 0 0 1px rgba(200,220,245,0.7);"></div>
<div style="left:2014.0px;top:1559.5px;width:1.0px;height:103.0px;background:rgba(200,220,245,0.6);"></div>
<div style="left:1831px;top:1691.5px;width:108px;height:96px;background:rgba(63,149,253,0.49);border-radius:14px;border:2.2px solid #285492;box-shadow:inset 0 0 0 1px rgba(200,220,245,0.7);"></div>
<div style="left:1833.5px;top:1739.0px;width:103.0px;height:1.0px;background:rgba(200,220,245,0.6);"></div>
<div class="ann" style="left:2068.48px;top:124.34px;transform:scaleX(1.0015);transform-origin:0 0;">dock top</div>
<div style="left:2204.0px;top:207.5px;width:8.0px;height:134.5px;background:#fff5b5;box-shadow:2px 3px 4px rgba(0,0,0,0.7);"></div>
<div class="ann" style="left:2003.75px;top:2540.44px;transform:scaleX(1.0116);transform-origin:0 0;">dock bottom</div>
<div style="left:2204.0px;top:2442.0px;width:8.0px;height:86.0px;background:#fff5b5;box-shadow:2px 3px 4px rgba(0,0,0,0.7);"></div>
<div class="ann" style="left:1753.69px;top:1278.04px;transform:scaleX(1.0300);transform-origin:0 0;">split top</div>
<div style="left:1881.0px;top:1362.0px;width:8.0px;height:77.0px;background:#fff5b5;box-shadow:2px 3px 4px rgba(0,0,0,0.7);"></div>
<div class="ann" style="left:1689.18px;top:1870.44px;transform:scaleX(1.0340);transform-origin:0 0;">split bottom</div>
<div style="left:1881.0px;top:1780.0px;width:8.0px;height:78.0px;background:#fff5b5;box-shadow:2px 3px 4px rgba(0,0,0,0.7);"></div>
<div class="ann" style="left:1349.07px;top:1574.34px;transform:scaleX(1.0420);transform-origin:0 0;">split left</div>
<div style="left:1637.0px;top:1605.8px;width:78.0px;height:8.3px;background:#fff5b5;box-shadow:2px 3px 4px rgba(0,0,0,0.7);"></div>
<div class="ann" style="left:2157.82px;top:1574.24px;transform:scaleX(1.0160);transform-origin:0 0;">split right</div>
<div style="left:2055.6px;top:1605.8px;width:78.0px;height:8.3px;background:#fff5b5;box-shadow:2px 3px 4px rgba(0,0,0,0.7);"></div>
<div class="ann" style="left:1435.92px;top:1424.44px;transform:scaleX(0.9820);transform-origin:0 0;">make tab</div>
<svg style="left:1745.0px;top:1470.0px;" width="100" height="100" viewBox="0 0 100 100"><path d="M13.7 13.6L91.9 92" stroke="#fff5b5" stroke-width="7.8"/></svg>
<div class="ann" style="left:0px;top:0px;transform-origin:0 0;transform:translate(124.8px,1529.9px) rotate(-90deg) scaleX(0.998);text-shadow:-4px 3px 4px rgba(0,0,0,0.85);">dock left</div>
<div style="left:208.3px;top:1387.0px;width:86.3px;height:9.4px;background:#fff5b5;box-shadow:2px 3px 4px rgba(0,0,0,0.7);"></div>
<div class="ann" style="left:0px;top:0px;transform-origin:0 0;transform:translate(4290.7px,1231.1px) rotate(90deg) scaleX(0.995);text-shadow:3px -4px 4px rgba(0,0,0,0.85);">dock right</div>
<div style="left:4122.0px;top:1386.5px;width:86.0px;height:9.4px;background:#fff5b5;box-shadow:2px 3px 4px rgba(0,0,0,0.7);"></div>
</body></html>
